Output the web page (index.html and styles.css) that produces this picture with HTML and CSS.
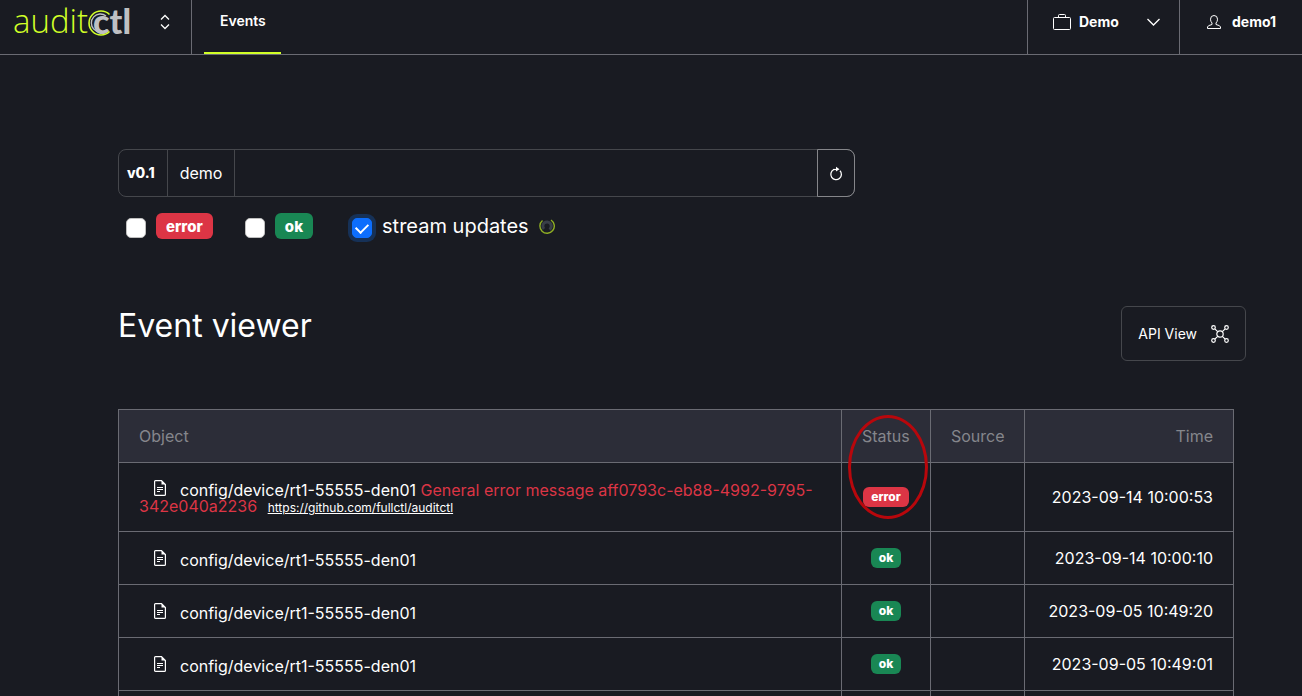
FILE: index.html
```html
<!DOCTYPE html>
<html lang="en">
<head>
  <meta charset="UTF-8" />
  <meta name="viewport" content="width=device-width, initial-scale=1.0" />
  <title>auditCtl</title>
  <link rel="stylesheet" href="styles.css">
</head>
<body>
  <svg class="defs" width="0" height="0">
    <symbol id="icon-file" viewBox="0 0 12 16">
      <path d="M1.5 .6H7.5L11.4 4.5V14.4Q11.4 15.4 10.4 15.4H1.6Q.6 15.4 .6 14.4V1.6Q.6 .6 1.5 .6Z" fill="none" stroke="currentColor" stroke-width="1.2"/>
      <path d="M7.5 .6V4.5H11.4Z" fill="currentColor"/>
      <path d="M3 7.5H9M3 9.5H9M3 11.5H6" stroke="currentColor" stroke-width="1"/>
    </symbol>
  </svg>

  <header class="header">
    <div class="header-app">
      <a class="logo" href="#"><span class="logo-light">audit</span><span class="logo-c">c<svg viewBox="0 0 26 26"><path d="M21.5 4.5A12 12 0 1 0 21.5 21.5" fill="none" stroke="#d1ff27" stroke-width="1.6"/><path d="M18 6A9 9 0 1 0 18 20" fill="none" stroke="#bfc0c3" stroke-width="1.4"/></svg></span><span class="logo-bold">tl</span></a>
      <button class="app-switch" aria-label="Switch app">
        <svg width="10" height="16" viewBox="0 0 10 16" fill="none" stroke="currentColor" stroke-width="1.3"><path d="M1 5.5L5 1.5L9 5.5M1 10.5L5 14.5L9 10.5"/></svg>
      </button>
    </div>
    <nav class="tabs">
      <a class="tab" href="#">Events</a>
    </nav>
    <button class="header-org">
      <svg width="18" height="16" viewBox="0 0 18 16" fill="none" stroke="currentColor"><rect x=".5" y="3.5" width="17" height="12" rx="1"/><path d="M5.5 3.5V1.5Q5.5 .5 6.5 .5H11.5Q12.5 .5 12.5 1.5V3.5"/></svg>
      <span>Demo</span>
      <svg class="chevron" width="13" height="8" viewBox="0 0 13 8" fill="none" stroke="currentColor" stroke-width="1.3"><path d="M.5 1L6.5 7L12.5 1"/></svg>
    </button>
    <button class="header-user">
      <svg width="14" height="14" viewBox="0 0 14 14" fill="none" stroke="currentColor"><path d="M5 9.5V8Q3.5 6.5 3.5 4.2Q3.5 .5 7 .5T10.5 4.2Q10.5 6.5 9 8V9.5Q13.5 10.5 13.5 12V13.5H.5V12Q.5 10.5 5 9.5Z"/></svg>
      <span>demo1</span>
    </button>
  </header>

  <main class="content">
    <div class="toolbar">
      <span class="version">v0.1</span>
      <label class="scope" for="filter">demo</label>
      <input class="filter" id="filter" type="text">
      <button class="refresh" aria-label="Refresh">
        <svg width="14" height="15" viewBox="0 0 14 15"><path d="M11 4.8A5.3 5.3 0 1 1 4.5 3.8" fill="none" stroke="currentColor" stroke-width="1.3"/><path d="M4 3.5H7.5" stroke="currentColor" stroke-width="1.2"/><path d="M7 .8V5.5L10.5 3.2Z" fill="currentColor"/></svg>
      </button>
    </div>

    <div class="checks">
      <label class="check"><input type="checkbox"><span class="badge badge-lg error">error</span></label>
      <label class="check"><input type="checkbox"><span class="badge badge-lg ok">ok</span></label>
      <label class="check stream"><input type="checkbox" checked><span>stream updates</span>
        <svg width="16" height="16" viewBox="0 0 16 16" fill="none"><path d="M3.5 2.5A7.2 7.2 0 1 0 12 2" stroke="#8fae24" stroke-width="1.4"/><path d="M5 11A4.2 4.2 0 1 1 10.5 11.5" stroke="#393e48" stroke-width="3"/></svg>
      </label>
    </div>

    <div class="title-row">
      <h1>Event viewer</h1>
      <button class="api-view">API View
        <svg width="18" height="18" viewBox="0 0 18 18" fill="none" stroke="currentColor" stroke-width="1.2"><circle cx="9" cy="9" r="3.2"/><circle cx="2.5" cy="2.5" r="1.8"/><circle cx="15.5" cy="2.5" r="1.8"/><circle cx="2.5" cy="15.5" r="1.8"/><circle cx="15.5" cy="15.5" r="1.8"/><path d="M3.8 3.8L6.7 6.7M14.2 3.8L11.3 6.7M3.8 14.2L6.7 11.3M14.2 14.2L11.3 11.3"/></svg>
      </button>
    </div>

    <table class="events">
      <thead>
        <tr>
          <th class="col-object">Object</th>
          <th class="col-status">Status<span class="marker"></span></th>
          <th class="col-source">Source</th>
          <th class="col-time">Time</th>
        </tr>
      </thead>
      <tbody>
        <tr class="tall">
          <td class="object"><svg class="file"><use href="#icon-file"/></svg>config/device/rt1-55555-den01 <span class="message">General error message aff0793c-eb88-4992-9795-342e040a2236</span> <a class="link" href="#">https://github.com/fullctl/auditctl</a></td>
          <td class="status"><span class="badge error">error</span></td>
          <td></td>
          <td class="time">2023-09-14 10:00:53</td>
        </tr>
        <tr>
          <td class="object"><svg class="file"><use href="#icon-file"/></svg>config/device/rt1-55555-den01</td>
          <td class="status"><span class="badge ok">ok</span></td>
          <td></td>
          <td class="time">2023-09-14 10:00:10</td>
        </tr>
        <tr>
          <td class="object"><svg class="file"><use href="#icon-file"/></svg>config/device/rt1-55555-den01</td>
          <td class="status"><span class="badge ok">ok</span></td>
          <td></td>
          <td class="time">2023-09-05 10:49:20</td>
        </tr>
        <tr>
          <td class="object"><svg class="file"><use href="#icon-file"/></svg>config/device/rt1-55555-den01</td>
          <td class="status"><span class="badge ok">ok</span></td>
          <td></td>
          <td class="time">2023-09-05 10:49:01</td>
        </tr>
        <tr>
          <td></td>
          <td></td>
          <td></td>
          <td></td>
        </tr>
      </tbody>
    </table>
  </main>
</body>
</html>
```

FILE: styles.css
```css
:root {
  --bg: #191b22;
  --head: #2c2d38;
  --line: #6a6b73;
  --line-dim: #45474c;
  --accent: #d1ff27;
  --error: #dc3545;
  --ok: #198754;
}
* {
  box-sizing: border-box;
}
html {
  scrollbar-width: none;
}
body {
  margin: 0;
  background: var(--bg);
  color: #fff;
  font-family: Inter, "Liberation Sans", sans-serif;
  font-size: 16px;
  line-height: 16px;
}
button {
  background: none;
  border: 0;
  padding: 0;
  color: inherit;
  font: inherit;
  cursor: pointer;
}
a {
  color: inherit;
}
svg {
  flex-shrink: 0;
}
.defs {
  position: absolute;
}

/* header */
.header {
  display: flex;
  height: 55px;
  border-bottom: 1px solid var(--line);
  font-size: 14px;
  font-weight: 600;
}
.header-app {
  display: flex;
  align-items: center;
  justify-content: space-between;
  width: 192px;
  padding: 0 21px 12px 13px;
  border-right: 1px solid var(--line);
}
.logo {
  display: flex;
  font-family: Lato, sans-serif;
  font-size: 34px;
  line-height: 36px;
  text-decoration: none;
}
.logo-light {
  color: var(--accent);
  font-family: "Open Sans", sans-serif;
  font-size: 33px;
  font-weight: 300;
}
.logo-c {
  position: relative;
  padding-left: 5px;
  color: #bfc0c3;
  font-weight: 900;
}
.logo-c svg {
  position: absolute;
  left: 0;
  top: 7px;
  width: 26px;
  height: 26px;
}
.logo-bold {
  color: #bfc0c3;
  font-weight: 900;
}
.app-switch {
  display: flex;
  padding-top: 2px;
}
.tabs {
  display: flex;
  flex: 1;
  padding-left: 12px;
}
.tab {
  padding: 13px 15px 0 16px;
  border-bottom: 2px solid var(--accent);
  text-decoration: none;
}
.header-org,
.header-user {
  display: flex;
  align-items: center;
  border-left: 1px solid var(--line);
  padding: 0 19px 10px 25px;
  gap: 8px;
  font-weight: 700;
}
.header-org {
  width: 152px;
}
.chevron {
  margin-left: auto;
}
.header-user {
  width: 123px;
  padding: 0 24px 10px 27px;
  gap: 11px;
}

/* filter bar */
.content {
  padding: 94px 68px 0 118px;
}
.toolbar {
  display: flex;
  width: 66%;
  height: 48px;
  border: 1px solid var(--line-dim);
  border-radius: 8px;
}
.version,
.scope {
  display: flex;
  align-items: center;
  border-right: 1px solid var(--line-dim);
}
.version {
  padding: 0 12px 0 8px;
  font-size: 14px;
  font-weight: 800;
}
.scope {
  padding: 0 12px;
}
.filter {
  flex: 1;
  min-width: 0;
  background: none;
  border: 0;
  color: inherit;
  font: inherit;
  outline: none;
}
.refresh {
  display: flex;
  align-items: center;
  justify-content: center;
  width: 38px;
  margin: -1px;
  border: 1px solid #85868a;
  border-radius: 0 8px 8px 0;
}
.checks {
  display: flex;
  align-items: center;
  margin-top: 14px;
  padding-left: 8px;
  gap: 32px;
  height: 30px;
}
.check {
  display: flex;
  align-items: center;
  gap: 10px;
}
.check input {
  appearance: none;
  width: 20px;
  height: 20px;
  margin: 4px 0 0;
  border: 1px solid #bfbfbf;
  border-radius: 5px;
  background: #fff;
}
.check input:checked {
  display: flex;
  align-items: center;
  justify-content: center;
  border-color: #0d6efd;
  background: #0d6efd;
  box-shadow: 0 0 0 4px #163157;
}
.check input:checked::before {
  content: "";
  width: 10px;
  height: 6px;
  border-left: 2px solid #fff;
  border-bottom: 2px solid #fff;
  transform: translateY(-1px) rotate(-45deg);
}
.stream {
  margin-left: 7px;
  padding-bottom: 1px;
  font-size: 20px;
  line-height: 24px;
}
.badge {
  display: inline-block;
  padding: 4px 8px;
  border-radius: 6px;
  font-size: 12px;
  font-weight: 800;
  line-height: 12px;
}
.badge-lg {
  padding: 6px 10px 4px;
  font-size: 15px;
  line-height: 16px;
}
.error {
  background: var(--error);
}
.ok {
  background: var(--ok);
}

/* title */
.title-row {
  display: flex;
  align-items: center;
  justify-content: space-between;
  margin: 65px -12px 48px 0;
}
h1 {
  margin: 0 0 15px;
  font-size: 32px;
  font-weight: 400;
  line-height: 40px;
}
.api-view {
  display: flex;
  align-items: center;
  gap: 14px;
  height: 55px;
  padding: 0 16px;
  border: 1px solid var(--line-dim);
  border-radius: 6px;
  font-size: 14px;
  font-weight: 400;
}

/* events table */
.events {
  width: 100%;
  table-layout: fixed;
  border-collapse: collapse;
}
.events th,
.events td {
  height: 53px;
  padding: 0 20px;
  border: 1px solid var(--line);
}
.events th {
  background: var(--head);
  color: #85868c;
  font-weight: 400;
  text-align: left;
}
.events .object {
  padding-top: 2px;
}
.col-status {
  position: relative;
  width: 89px;
}
.col-source {
  width: 94px;
}
.col-time {
  width: 209px;
}
.events .col-time,
.time {
  text-align: right;
}
.events .tall td {
  height: 69px;
}
.events .status {
  padding: 0;
  text-align: center;
}
.file {
  width: 12px;
  height: 16px;
  margin: 0 14px 0 15px;
}
.message {
  color: var(--error);
}
.link {
  margin-left: 6px;
  font-size: 12px;
}
.marker {
  position: absolute;
  left: 6px;
  top: 5px;
  width: 80px;
  height: 104px;
  border: 3px solid #b8070c;
  border-radius: 50%;
}
```
